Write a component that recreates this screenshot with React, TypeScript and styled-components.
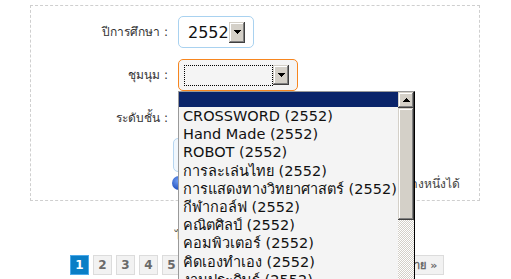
import React from "react";
import styled, { createGlobalStyle } from "styled-components";

const GlobalStyle = createGlobalStyle`
  html, body { margin: 0; padding: 0; background: #fff; }
  body { font-family: "DejaVu Sans", "Noto Sans", sans-serif; color: #333; }
`;

const Page = styled.div`
  width: 511px;
  height: 279px;
  overflow: hidden;
  position: relative;
`;

const Panel = styled.div`
  box-sizing: border-box;
  width: 450px;
  height: 196px;
  margin: 5px 0 0 30px;
  border: 1px dashed #cfcfcf;
  padding-top: 10px;
  display: grid;
  grid-template-columns: 137px 1fr;
  column-gap: 10px;
  row-gap: 11px;
  align-content: start;
`;

const Label = styled.div<{ $top?: number }>`
  font-size: 12px;
  color: #333;
  text-align: right;
  line-height: ${(p) => (p.$top ? "16px" : "32px")};
  padding-top: ${(p) => p.$top ?? 0}px;
  white-space: nowrap;
`;

const Control = styled.div`
  display: flex;
  flex-direction: column;
  align-items: flex-start;
`;

const SelectBox = styled.div<{ $width: number; $focus?: boolean }>`
  position: relative;
  box-sizing: border-box;
  width: ${(p) => p.$width}px;
  height: 32px;
  display: flex;
  align-items: center;
  padding: 0 8px 0 5px;
  border: 1px solid ${(p) => (p.$focus ? "#f7861f" : "#a9d2f0")};
  border-radius: 5px;
  background: ${(p) => (p.$focus ? "#f4f4f4" : "#fff")};
`;

const Value = styled.div<{ $dotted?: boolean }>`
  box-sizing: border-box;
  flex: 1;
  height: 21px;
  padding-left: 4px;
  font-size: 16px;
  line-height: 21px;
  color: #111;
  border: ${(p) => (p.$dotted ? "1px dotted #000" : "none")};
`;

const DropButton = styled.div<{ $h: number }>`
  box-sizing: border-box;
  width: 16px;
  height: ${(p) => p.$h}px;
  background: #d4d0c8;
  display: flex;
  align-items: center;
  justify-content: center;
  box-shadow: inset -1px -1px #404040, inset 1px 1px #d4d0c8,
    inset -2px -2px #808080, inset 2px 2px #fff;
`;

const ListPopup = styled.div`
  position: absolute;
  left: -1px;
  top: 31px;
  width: 237px;
  height: 200px;
  box-sizing: border-box;
  border-top: 1px solid #9a9a9a;
  border-left: 1px solid #9a9a9a;
  border-right: 1px solid #000;
  background: #f4f4f4;
  display: grid;
  grid-template-columns: 1fr 16px;
  overflow: hidden;
  z-index: 5;
`;

const Items = styled.div`
  display: flex;
  flex-direction: column;
`;

const Item = styled.div<{ $selected?: boolean }>`
  height: ${(p) => (p.$selected ? "15px" : "18.2px")};
  flex: none;
  background: ${(p) => (p.$selected ? "#0a246a" : "transparent")};
  padding-left: 4px;
  font-size: 14.5px;
  line-height: 18px;
  color: #111;
  white-space: nowrap;
`;

const ScrollBar = styled.div`
  display: flex;
  flex-direction: column;
  background: conic-gradient(#d4d0c8 25%, #fff 0 50%, #d4d0c8 0 75%, #fff 0) 0 0 / 2px 2px;
`;

const ScrollPart = styled.div<{ $h: number }>`
  height: ${(p) => p.$h}px;
  flex: none;
  background: #d4d0c8;
  display: flex;
  align-items: center;
  justify-content: center;
  box-shadow: inset -1px -1px #404040, inset 1px 1px #d4d0c8,
    inset -2px -2px #808080, inset 2px 2px #fff;
`;

const LevelBox = styled.div`
  box-sizing: border-box;
  width: 220px;
  height: 34px;
  margin: 36px 0 0 -5px;
  border: 1px solid #b6d6f1;
  border-radius: 5px;
  background: #f1f7fd;
`;

const Note = styled.div`
  box-sizing: border-box;
  width: 288px;
  display: flex;
  align-items: center;
  gap: 6px;
  margin: 3px 0 0 -6px;
  height: 16px;
  font-size: 12px;
  color: #444;
  white-space: nowrap;
`;

const NoteText = styled.span`
  flex: 1;
  text-align: right;
  overflow: hidden;
`;

const Dot = styled.span`
  width: 14px;
  height: 14px;
  border-radius: 50%;
  background: radial-gradient(circle at 40% 35%, #6f9cf0, #2352c0 70%);
  flex: none;
`;

const HiddenLine = styled.div`
  margin-top: 27px;
  padding-left: 175px;
  height: 16px;
  font-size: 12px;
  line-height: 16px;
  color: #444;
  white-space: nowrap;
`;

const Pager = styled.div`
  display: flex;
  gap: 4px;
  margin-top: 11px;
  padding-left: 70px;
`;

const PageBtn = styled.div<{ $active?: boolean; $w?: number }>`
  box-sizing: border-box;
  min-width: ${(p) => p.$w ?? 19}px;
  height: 20px;
  padding: 0 ${(p) => (p.$w ? 6 : 0)}px;
  display: flex;
  align-items: center;
  justify-content: ${(p) => (p.$w ? "flex-end" : "center")};
  font-size: ${(p) => (p.$w ? 11 : 12)}px;
  font-weight: bold;
  color: ${(p) => (p.$active ? "#fff" : "#6a6a6a")};
  background: ${(p) => (p.$active ? "#0a7ec6" : "#f2f2f2")};
  border: 1px solid ${(p) => (p.$active ? "#4aa9ea" : "#dcdcdc")};
  white-space: nowrap;
`;

const Arrow = ({ up }: { up?: boolean }) => (
  <svg width="7" height="4" viewBox="0 0 7 4" shapeRendering="crispEdges">
    <path
      fill="#000"
      d={
        up
          ? "M3 0h1v1H3zM2 1h3v1H2zM1 2h5v1H1zM0 3h7v1H0z"
          : "M0 0h7v1H0zM1 1h5v1H1zM2 2h3v1H2zM3 3h1v1H3z"
      }
    />
  </svg>
);

const clubs = [
  "CROSSWORD (2552)",
  "Hand Made (2552)",
  "ROBOT (2552)",
  "การละเล่นไทย (2552)",
  "การแสดงทางวิทยาศาสตร์ (2552)",
  "กีฬากอล์ฟ (2552)",
  "คณิตศิลป์ (2552)",
  "คอมพิวเตอร์ (2552)",
  "คิดเองทำเอง (2552)",
  "งานประดิษฐ์ (2552)",
  "ดนตรีไทย (2552)",
];

export default function App() {
  return (
    <Page>
      <GlobalStyle />
      <Panel>
        <Label>ปีการศึกษา :</Label>
        <Control>
          <SelectBox $width={76}>
            <Value>2552</Value>
            <DropButton $h={21}>
              <Arrow />
            </DropButton>
          </SelectBox>
        </Control>

        <Label>ชุมนุม :</Label>
        <Control>
          <SelectBox $width={120} $focus>
            <Value $dotted />
            <DropButton $h={20}>
              <Arrow />
            </DropButton>
            <ListPopup>
              <Items>
                <Item $selected />
                {clubs.map((c) => (
                  <Item key={c}>{c}</Item>
                ))}
              </Items>
              <ScrollBar>
                <ScrollPart $h={16}>
                  <Arrow up />
                </ScrollPart>
                <ScrollPart $h={112} />
              </ScrollBar>
            </ListPopup>
          </SelectBox>
        </Control>

        <Label $top={8}>ระดับชั้น :</Label>
        <Control>
          <LevelBox />
          <Note>
            <Dot />
            <NoteText>เลือกได้อย่างใดอย่างหนึ่งได้</NoteText>
          </Note>
        </Control>
      </Panel>
      <HiddenLine>ไม่พบรายชื่อนักเรียน</HiddenLine>
      <Pager>
        <PageBtn $active>1</PageBtn>
        <PageBtn>2</PageBtn>
        <PageBtn>3</PageBtn>
        <PageBtn>4</PageBtn>
        <PageBtn>5</PageBtn>
        <PageBtn>6</PageBtn>
        <PageBtn>7</PageBtn>
        <PageBtn>8</PageBtn>
        <PageBtn>9</PageBtn>
        <PageBtn $w={25}>10</PageBtn>
        <PageBtn $w={69}>ถัดไป »</PageBtn>
        <PageBtn $w={61}>สุดท้าย »</PageBtn>
      </Pager>
    </Page>
  );
}
